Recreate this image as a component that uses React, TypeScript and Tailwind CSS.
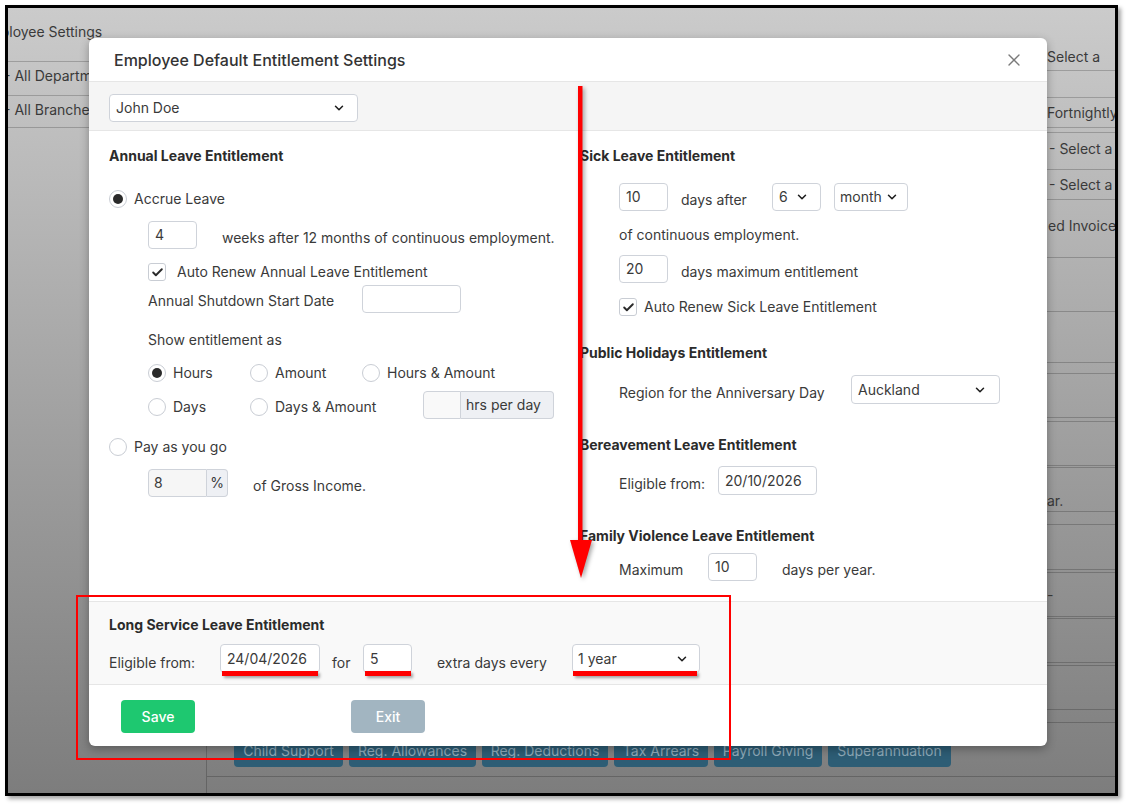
import { Check, ChevronDown, X } from 'lucide-react'

const stripRows: { h: string; label?: string }[] = [
  { h: 'h-[63px] items-end pb-[3px]', label: 'Select a' },
  { h: 'h-[27px]' },
  { h: 'h-[30px] items-center', label: 'Fortnightly' },
  { h: 'h-[5px]' },
  { h: 'h-[37px] items-center pb-[4px] pl-[3px]', label: '- Select a' },
  { h: 'h-[30px] items-center pl-[3px]', label: '- Select a' },
  { h: 'h-[58px] items-start pt-[16px] pl-[2px]', label: 'ed Invoice' },
  { h: 'h-[54px]' },
  { h: 'h-[51px]' },
  { h: 'h-[11px]' },
  { h: 'h-[44px]' },
  { h: 'h-[4px]' },
  { h: 'h-[44px]' },
  { h: 'h-[2px]' },
  { h: 'h-[44px] items-end pb-[-2px]', label: 'ar.' },
  { h: 'h-[13px]' },
  { h: 'h-[45px]' },
  { h: 'h-[3px]' },
  { h: 'h-[44px] items-center', label: '-' },
  { h: 'h-[2px]' },
  { h: 'h-[44px]' },
  { h: 'h-[3px]' },
  { h: 'h-[44px]' },
  { h: 'h-[13px]' },
]

const pageButtons = [
  { label: 'Child Support', w: 'w-[109px]' },
  { label: 'Reg. Allowances', w: 'w-[127px]' },
  { label: 'Reg. Deductions', w: 'w-[126px]' },
  { label: 'Tax Arrears', w: 'w-[94px]' },
  { label: 'Payroll Giving', w: 'w-[108px]' },
  { label: 'Superannuation', w: 'w-[123px]' },
]

function Radio({ label, checked = false }: { label: string; checked?: boolean }) {
  return (
    <label className="flex h-[20px] items-center gap-[7px]">
      <span className="flex h-[18px] w-[18px] shrink-0 items-center justify-center rounded-full border border-[#c9cdd4] bg-white">
        {checked && <span className="h-[10px] w-[10px] rounded-full bg-[#2a2a2a]" />}
      </span>
      <span>{label}</span>
    </label>
  )
}

function Checkbox({ label, gap }: { label: string; gap: string }) {
  return (
    <label className={`flex h-[20px] items-center ${gap}`}>
      <span className="flex h-[18px] w-[18px] items-center justify-center rounded-[3px] border border-[#c9cdd4] bg-white">
        <Check size={13} strokeWidth={3.5} className="text-[#2a2a2a]" />
      </span>
      <span>{label}</span>
    </label>
  )
}

function Field({ value = '', className }: { value?: string; className: string }) {
  return (
    <div className={`flex items-center rounded-[4px] border border-[#cfd3da] bg-white px-[6px] ${className}`}>
      {value}
    </div>
  )
}

function Select({ value, className }: { value: string; className: string }) {
  return (
    <div className={`flex items-center justify-between rounded-[4px] border border-[#cfd3da] bg-white ${className}`}>
      <span>{value}</span>
      <ChevronDown size={14} strokeWidth={2.6} className="text-[#1f1f1f]" />
    </div>
  )
}

function Heading({ children, className = '' }: { children: string; className?: string }) {
  return <h3 className={`text-[14px] font-bold leading-[18px] text-[#2b2b2b] ${className}`}>{children}</h3>
}

function BackgroundPage() {
  return (
    <div className="ml-[5px] mt-[5px] flex h-[791px] w-[1113px] overflow-hidden border-[3px] border-black bg-linear-to-b from-[#cbcbcb] to-[#7d7d7d] text-[14px] text-[#3a3a3a] shadow-[3px_3px_4px_rgba(0,0,0,0.35)]">
      <aside className="flex w-[199px] shrink-0 flex-col">
        <div className="h-[54px] border-b border-black/20 pt-[14px] leading-[20px]">
          <span className="ml-[-28px] whitespace-nowrap">Employee Settings</span>
        </div>
        <div className="h-[34px] border-b border-black/20 pt-[4px] leading-[20px]">
          <span className="ml-[-4px] whitespace-nowrap">- All Departments</span>
        </div>
        <div className="h-[32px] border-b border-black/20 pt-[4px] leading-[20px]">
          <span className="ml-[-4px] whitespace-nowrap">- All Branches</span>
        </div>
        <div className="mt-auto h-[111px] border-r border-black/20" />
      </aside>

      <main className="flex flex-1 flex-col">
        <div className="flex h-[715px] justify-end">
          <div className="flex w-[69px] flex-col">
            {stripRows.map((row, i) => (
              <div key={i} className={`flex border-b border-black/20 pl-[1px] leading-[20px] whitespace-nowrap ${row.h}`}>
                {row.label}
              </div>
            ))}
          </div>
        </div>
        <div className="flex gap-[6px] border-b border-black/20 pb-[9px] pl-[27px] pt-[10px]">
          {pageButtons.map((b) => (
            <div key={b.label} className={`flex h-[34px] items-center justify-center rounded-[4px] bg-[#2d5d75] text-[#8ea9b8] ${b.w}`}>
              {b.label}
            </div>
          ))}
        </div>
      </main>
    </div>
  )
}

function EntitlementModal() {
  return (
    <div className="absolute left-[89px] top-[38px] w-[958px] overflow-hidden rounded-[6px] bg-white text-[14px] leading-[20px] text-[#3a3a3a] shadow-[0_3px_10px_rgba(0,0,0,0.3)]">
      <div className="flex h-[44px] items-center justify-between border-b border-[#e6e6e6] pl-[25px] pr-[23px]">
        <h2 className="text-[16px] font-medium text-[#333]">Employee Default Entitlement Settings</h2>
        <X size={20} strokeWidth={1.6} className="text-[#7a7a7a]" />
      </div>

      <div className="h-[49px] border-b border-[#e6e6e6] bg-[#f5f5f5] px-[20px] pt-[12px]">
        <Select value="John Doe" className="h-[28px] w-[249px] pl-[6px] pr-[11px]" />
      </div>

      <div className="grid grid-cols-[471px_1fr] px-[20px] pb-[20px] pt-[16px]">
        <div>
          <Heading>Annual Leave Entitlement</Heading>
          <div className="mt-[24px]">
            <Radio checked label="Accrue Leave" />
          </div>
          <div className="ml-[39px]">
            <div className="mt-[12px] flex items-center">
              <Field value="4" className="h-[28px] w-[49px]" />
              <span className="ml-[25px] pt-[6px]">weeks after 12 months of continuous employment.</span>
            </div>
            <div className="mt-[13px]">
              <Checkbox label="Auto Renew Annual Leave Entitlement" gap="gap-[11px]" />
            </div>
            <div className="mt-[3px] flex items-center">
              <span className="w-[214px] pt-[4px]">Annual Shutdown Start Date</span>
              <Field className="h-[28px] w-[99px]" />
            </div>
            <p className="mt-[17px]">Show entitlement as</p>
            <div className="mt-[13px] flex">
              <div className="w-[102px]"><Radio checked label="Hours" /></div>
              <div className="w-[112px]"><Radio label="Amount" /></div>
              <Radio label="Hours & Amount" />
            </div>
            <div className="mt-[8px] flex h-[28px] items-center">
              <div className="w-[102px] pt-[3px]"><Radio label="Days" /></div>
              <div className="w-[173px] pt-[3px]"><Radio label="Days & Amount" /></div>
              <div className="flex h-[28px]">
                <div className="w-[38px] rounded-l-[4px] border border-[#cfd3da] bg-[#f9f9f9]" />
                <div className="flex w-[93px] items-center rounded-r-[4px] border border-l-0 border-[#cfd3da] bg-[#eef0f4] pl-[5px]">hrs per day</div>
              </div>
            </div>
          </div>
          <div className="mt-[18px]">
            <Radio label="Pay as you go" />
          </div>
          <div className="ml-[39px] mt-[12px] flex items-center">
            <div className="flex h-[28px]">
              <div className="flex w-[59px] items-center rounded-l-[4px] border border-[#cfd3da] bg-[#f6f6f6] pl-[5px]">8</div>
              <div className="flex w-[21px] items-center justify-center rounded-r-[4px] border border-l-0 border-[#cfd3da] bg-[#eef0f4]">%</div>
            </div>
            <span className="ml-[25px] pt-[5px]">of Gross Income.</span>
          </div>
        </div>

        <div>
          <Heading>Sick Leave Entitlement</Heading>
          <div className="ml-[39px]">
            <div className="mt-[18px] flex items-center">
              <Field value="10" className="h-[28px] w-[49px]" />
              <span className="ml-[13px] w-[91px] pt-[6px]">days after</span>
              <Select value="6" className="h-[28px] w-[49px] pl-[6px] pr-[11px]" />
              <Select value="month" className="ml-[13px] h-[28px] w-[74px] pl-[5px] pr-[8px]" />
            </div>
            <p className="mt-[14px]">of continuous employment.</p>
            <div className="mt-[10px] flex items-center">
              <Field value="20" className="h-[28px] w-[49px]" />
              <span className="ml-[13px] pt-[5px]">days maximum entitlement</span>
            </div>
            <div className="mt-[14px]">
              <Checkbox label="Auto Renew Sick Leave Entitlement" gap="gap-[7px]" />
            </div>
          </div>

          <Heading className="mt-[27px]">Public Holidays Entitlement</Heading>
          <div className="ml-[39px] mt-[13px] flex items-center">
            <span className="w-[232px] pt-[7px]">Region for the Anniversary Day</span>
            <Select value="Auckland" className="h-[29px] w-[149px] pl-[6px] pr-[12px]" />
          </div>

          <Heading className="mt-[32px]">Bereavement Leave Entitlement</Heading>
          <div className="ml-[39px] mt-[12px] flex items-center">
            <span className="w-[99px] pt-[7px]">Eligible from:</span>
            <Field value="20/10/2026" className="h-[29px] w-[99px]" />
          </div>

          <Heading className="mt-[32px]">Family Violence Leave Entitlement</Heading>
          <div className="ml-[39px] mt-[8px] flex items-center">
            <span className="w-[89px] pt-[5px]">Maximum</span>
            <Field value="10" className="h-[28px] w-[49px]" />
            <span className="ml-[25px] pt-[5px]">days per year.</span>
          </div>
        </div>
      </div>

      <div className="border-y border-[#e6e6e6] bg-[#f9f9f9] px-[20px] pb-[11px] pt-[14px]">
        <Heading>Long Service Leave Entitlement</Heading>
        <div className="mt-[10px] flex h-[29px] items-center">
          <span className="w-[111px] pt-[8px]">Eligible from:</span>
          <Field value="24/04/2026" className="h-[29px] w-[100px]" />
          <span className="ml-[12px] w-[31px] pt-[8px]">for</span>
          <Field value="5" className="h-[29px] w-[49px]" />
          <span className="ml-[25px] w-[135px] pt-[8px]">extra days every</span>
          <Select value="1 year" className="h-[29px] w-[128px] pl-[5px] pr-[10px]" />
        </div>
      </div>

      <div className="flex h-[61px] items-start px-[32px] pt-[15px]">
        <button className="h-[33px] w-[74px] rounded-[4px] bg-[#1ec870] font-medium text-white">Save</button>
        <button className="ml-[156px] h-[33px] w-[74px] rounded-[4px] bg-[#a2b5c1] font-medium text-white">Exit</button>
      </div>
    </div>
  )
}

function Annotations() {
  return (
    <>
      <svg
        className="absolute left-[570px] top-[86px] drop-shadow-[2px_2px_2px_rgba(0,0,0,0.35)]"
        width="24"
        height="494"
        viewBox="0 0 24 494"
      >
        <rect x="8" y="0" width="4.5" height="458" fill="#ff0000" />
        <polygon points="0,454 22,454 11,492" fill="#ff0000" />
      </svg>
      <div className="absolute left-[76px] top-[595px] h-[165px] w-[655px] border-2 border-[#ff0000]" />
      <div className="absolute left-[222px] top-[671px] h-[5px] w-[96px] bg-[#ff0000] shadow-[2px_2px_3px_rgba(0,0,0,0.35)]" />
      <div className="absolute left-[365px] top-[671px] h-[5px] w-[46px] bg-[#ff0000] shadow-[2px_2px_3px_rgba(0,0,0,0.35)]" />
      <div className="absolute left-[573px] top-[671px] h-[5px] w-[124px] bg-[#ff0000] shadow-[2px_2px_3px_rgba(0,0,0,0.35)]" />
    </>
  )
}

export default function App() {
  return (
    <div className="relative h-[804px] w-[1127px] overflow-hidden bg-white font-['Inter','Noto_Sans',sans-serif]">
      <BackgroundPage />
      <EntitlementModal />
      <Annotations />
    </div>
  )
}
